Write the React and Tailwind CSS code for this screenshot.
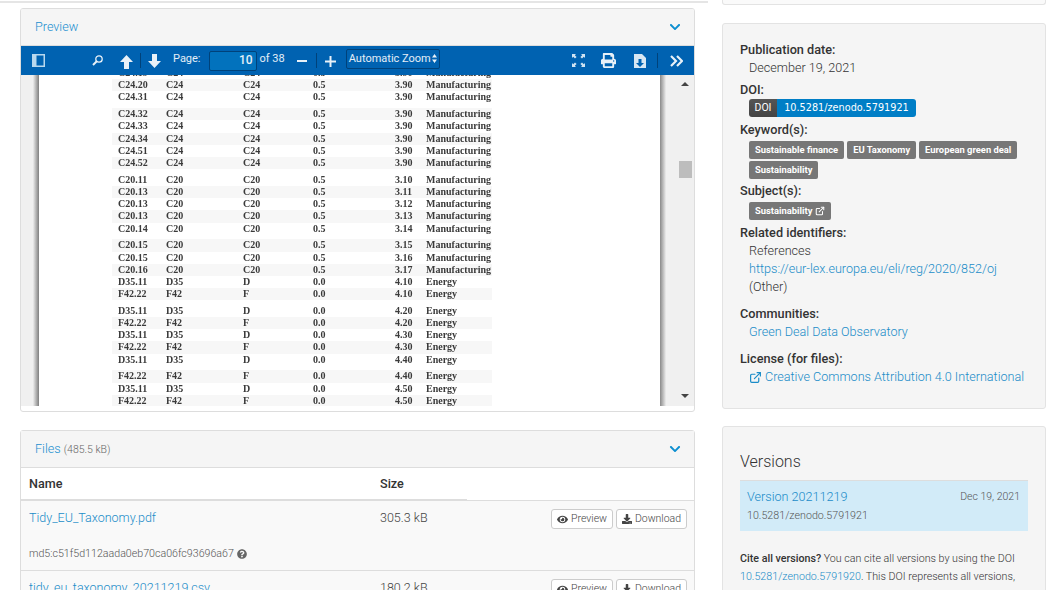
import { ExternalLink } from "lucide-react";
import { FaChevronDown, FaDownload, FaEye, FaQuestionCircle, FaPrint } from "react-icons/fa";

const m = "Manufacturing";
const e = "Energy";
const groups = [
  [
    ["C24.19", "C24", "C24", "0.5", "3.90", m],
    ["C24.20", "C24", "C24", "0.5", "3.90", m],
    ["C24.31", "C24", "C24", "0.5", "3.90", m],
  ],
  [
    ["C24.32", "C24", "C24", "0.5", "3.90", m],
    ["C24.33", "C24", "C24", "0.5", "3.90", m],
    ["C24.34", "C24", "C24", "0.5", "3.90", m],
    ["C24.51", "C24", "C24", "0.5", "3.90", m],
    ["C24.52", "C24", "C24", "0.5", "3.90", m],
  ],
  [
    ["C20.11", "C20", "C20", "0.5", "3.10", m],
    ["C20.13", "C20", "C20", "0.5", "3.11", m],
    ["C20.13", "C20", "C20", "0.5", "3.12", m],
    ["C20.13", "C20", "C20", "0.5", "3.13", m],
    ["C20.14", "C20", "C20", "0.5", "3.14", m],
  ],
  [
    ["C20.15", "C20", "C20", "0.5", "3.15", m],
    ["C20.15", "C20", "C20", "0.5", "3.16", m],
    ["C20.16", "C20", "C20", "0.5", "3.17", m],
    ["D35.11", "D35", "D", "0.0", "4.10", e],
    ["F42.22", "F42", "F", "0.0", "4.10", e],
  ],
  [
    ["D35.11", "D35", "D", "0.0", "4.20", e],
    ["F42.22", "F42", "F", "0.0", "4.20", e],
    ["D35.11", "D35", "D", "0.0", "4.30", e],
    ["F42.22", "F42", "F", "0.0", "4.30", e],
    ["D35.11", "D35", "D", "0.0", "4.40", e],
  ],
  [
    ["F42.22", "F42", "F", "0.0", "4.40", e],
    ["D35.11", "D35", "D", "0.0", "4.50", e],
    ["F42.22", "F42", "F", "0.0", "4.50", e],
  ],
];

function PdfTable() {
  let n = 0;
  return (
    <div className="ml-[73px] w-[380px] -mt-[8px] font-['Liberation_Serif',serif] font-bold text-[10px] text-[#3a3a3a] blur-[0.5px]">
      {groups.map((rows, gi) => (
        <div key={gi} className="mb-[4.64px]">
          {rows.map((r) => {
            n++;
            return (
              <div key={n} className={`grid grid-cols-[48px_77px_70px_82px_31px_1fr] pl-[6px] h-[12.2px] leading-[12.2px] ${n % 2 === 0 ? "bg-[#f7f7f7]" : "bg-white"}`}>
                {r.map((c, i) => <span key={i}>{c}</span>)}
              </div>
            );
          })}
        </div>
      ))}
    </div>
  );
}

function Toolbar() {
  return (
    <div className="h-[29px] bg-[#0062b1] flex items-center text-white/90 text-[11px] font-normal">
      <svg className="ml-[11px]" width="13" height="13" viewBox="0 0 13 13">
        <rect x="0.75" y="0.75" width="11.5" height="11.5" fill="none" stroke="#b9d8ee" strokeWidth="1.5" />
        <rect x="1" y="1" width="3.5" height="11" fill="#b9d8ee" />
      </svg>
      <svg className="ml-[47px]" width="11" height="11" viewBox="0 0 11 11" fill="none" stroke="#e8f1f8">
        <circle cx="7" cy="4" r="3.200" strokeWidth="1.300" />
        <path d="M4.500 6.500 1 10" strokeWidth="2" />
      </svg>
      <svg className="ml-[17px] mt-[2px]" width="13" height="14" viewBox="0 0 13 14"><path d="M6.500 0 13 7H9v7H4V7H0z" fill="#e8f1f8" /></svg>
      <span className="ml-[7px] w-px h-[15px] bg-[#00427a]" />
      <svg className="ml-[7px] mt-[1px]" width="13" height="14" viewBox="0 0 13 14"><path d="M6.500 14 0 7h4V0h5v7h4z" fill="#e8f1f8" /></svg>
      <span className="ml-[12px] -mt-[2px]">Page:</span>
      <span className="ml-[8px] w-[48px] h-[20px] bg-[#0272bd] border border-[#00427a] rounded-[2px] text-right pr-[3px] text-[12px] leading-[17px] font-medium">10</span>
      <span className="ml-[3px] -mt-[2px]">of 38</span>
      <svg className="ml-[12px] mt-[1px]" width="10" height="2" viewBox="0 0 10 2"><rect width="10" height="2" fill="#e8f1f8" /></svg>
      <span className="ml-[9px] w-px h-[15px] bg-[#00427a]" />
      <svg className="ml-[8px] mt-[1px]" width="11" height="11" viewBox="0 0 11 11"><path d="M4.500 0h2v4.500H11v2H6.500V11h-2V6.500H0v-2h4.500z" fill="#e8f1f8" /></svg>
      <span className="ml-[10px] w-[94px] h-[20px] -mt-[4px] border border-[#00427a] rounded-[2px] bg-[#0062b1] text-[11px] leading-[17px] pl-[2px] whitespace-nowrap flex items-center">
        Automatic Zoom
        <svg className="ml-px" width="5" height="9" viewBox="0 0 5 9" fill="#e8f1f8"><path d="M2.500 0 5 3.500H0zM2.500 9 0 5.500h5z" /></svg>
      </span>
      <svg className="ml-[132px]" width="13" height="13" viewBox="0 0 13 13" fill="#cfe3f2">
        <path d="M0 0h4L2.800 1.200 4.600 3 3 4.600 1.200 2.800 0 4zM13 0v4l-1.200-1.200L10 4.600 8.400 3l1.800-1.800L9 0zM0 13V9l1.200 1.200L3 8.400 4.600 10l-1.800 1.800L4 13zM13 13H9l1.200-1.200L8.400 10 10 8.400l1.800 1.800L13 9z" />
      </svg>
      <FaPrint className="ml-[16px] text-[#e8f1f8]" size={15} />
      <svg className="ml-[18px]" width="12" height="14" viewBox="0 0 12 14">
        <path d="M0 0h8l4 4v10H0z" fill="#d7e7f3" />
        <path d="M4.500 5h3v4H10l-4 4-4-4h2.500z" fill="#0062b1" />
      </svg>
      <span className="ml-[11px] w-px h-[15px] bg-[#00427a]" />
      <svg className="ml-[12px]" width="13" height="12" viewBox="0 0 13 12" fill="none" stroke="#e8f1f8" strokeWidth="2.200">
        <path d="M1 1l5 5-5 5M7 1l5 5-5 5" />
      </svg>
    </div>
  );
}

function Preview() {
  return (
    <div className="w-[675px] h-[404px] border border-[#dddddd] rounded-[3px] bg-white overflow-hidden">
      <div className="h-[37px] bg-[#f5f5f5] border-b border-[#dddddd] flex items-center justify-between pl-[14px] pr-[13px] text-[12.6px] font-light text-[#1a8fd0]">
        <span>Preview</span>
        <FaChevronDown size={12} className="text-[#0d8fd0]" />
      </div>
      <Toolbar />
      <div className="h-[331px] flex bg-[#f0f0f0] overflow-hidden">
        <div className="w-[12px] shrink-0" />
        <div className="w-[6px] shrink-0 bg-gradient-to-r from-[#eeeeee] to-[#808080]" />
        <div className="w-[621px] shrink-0 bg-white overflow-hidden">
          <PdfTable />
        </div>
        <div className="w-[6px] shrink-0 bg-gradient-to-r from-[#8a8a8a] to-[#eeeeee]" />
        <div className="flex-1 flex flex-col items-center pl-[10px] pt-[7px]">
          <span className="w-0 h-0 border-x-[4px] border-x-transparent border-b-[4px] border-b-[#444444]" />
          <span className="w-[13px] h-[17px] bg-[#bdbdbd] mt-[75px]" />
          <span className="w-0 h-0 border-x-[4px] border-x-transparent border-t-[4px] border-t-[#444444] mt-[216px]" />
        </div>
      </div>
    </div>
  );
}

function FileRow({ name, size, md5 }) {
  return (
    <div className="bg-[#f9f9f9] border-b border-[#dddddd] pl-2 pr-[7px] h-[70px] font-light">
      <div className="flex pt-[7px]">
        <a className="w-[351px] text-[#1a8cc8] text-[12.500px] leading-[20px]">{name}</a>
        <span className="text-[12.500px] leading-[20px] text-[#444444]">{size}</span>
        <div className="ml-auto flex gap-[3px] mt-px">
          <button className="h-[20px] w-[62px] border border-[#cccccc] rounded-[3px] bg-white text-[10.500px] text-[#444444] flex items-center justify-center gap-[3px]"><FaEye size={11} />Preview</button>
          <button className="h-[20px] w-[71px] border border-[#cccccc] rounded-[3px] bg-white text-[10.500px] text-[#444444] flex items-center justify-center gap-[3px]"><FaDownload size={10} />Download</button>
        </div>
      </div>
      {md5 && (
        <div className="mt-[16px] text-[10.650px] leading-[18px] text-[#555555] flex items-center gap-[3px]">
          md5:{md5} <FaQuestionCircle size={10} className="text-[#666666]" />
        </div>
      )}
    </div>
  );
}

function Files() {
  return (
    <div className="w-[675px] mt-[18px] border border-[#dddddd] rounded-t-[3px]">
      <div className="h-[37px] bg-[#f5f5f5] border-b border-[#dddddd] flex items-center justify-between pl-[14px] pr-[13px] font-light">
        <span className="text-[12.600px] text-[#1a8fd0]">Files <span className="text-[10.500px] text-[#666666]">(485.5 kB)</span></span>
        <FaChevronDown size={12} className="text-[#0d8fd0]" />
      </div>
      <div className="h-[33px] flex items-center pl-2 text-[12.600px] font-medium text-[#333333] bg-white relative border-b border-[#dddddd]">
        <span className="w-[351px]">Name</span>
        <span>Size</span>
        <span className="absolute left-0 -bottom-[1px] w-[446px] h-[2px] bg-[#dddddd]" />
      </div>
      <FileRow name="Tidy_EU_Taxonomy.pdf" size="305.3 kB" md5="c51f5d112aada0eb70ca06fc93696a67" />
      <FileRow name="tidy_eu_taxonomy_20211219.csv" size="180.2 kB" />
    </div>
  );
}

function Label({ children, className = "" }) {
  return <div className={`font-medium text-[12.700px] text-[#333333] leading-[18px] ${className}`}>{children}</div>;
}

function Keyword({ children }) {
  return <span className="h-[18px] px-[6px] bg-[#777777] text-white text-[9.400px] font-bold leading-[18px] rounded-[2px] flex items-center gap-[3px] whitespace-nowrap">{children}</span>;
}

function Meta() {
  return (
    <div className="h-[386px] mt-[18px] border border-[#e3e3e3] rounded-[3px] bg-[#f5f5f5] pl-[17px] pt-[17px] text-[12.600px] font-light text-[#333333]">
      <Label>Publication date:</Label>
      <div className="ml-[9px] leading-[18px]">December 19, 2021</div>
      <Label className="mt-[4px]">DOI:</Label>
      <div className="ml-[9px] flex w-fit h-[18px] rounded-[3px] overflow-hidden text-[10.500px] leading-[18px] text-white">
        <span className="w-[28px] bg-gradient-to-b from-[#555555] to-[#444444] text-center font-normal">DOI</span>
        <span className="w-[139px] bg-[#007ec6] text-center font-['DejaVu_Sans',sans-serif] text-[9.700px] font-normal">10.5281/zenodo.5791921</span>
      </div>
      <Label className="mt-[4px]">Keyword(s):</Label>
      <div className="ml-[9px] mt-[2px] flex flex-wrap gap-x-[3px] gap-y-[2px] w-[280px]">
        <Keyword>Sustainable finance</Keyword>
        <Keyword>EU Taxonomy</Keyword>
        <Keyword>European green deal</Keyword>
        <Keyword>Sustainability</Keyword>
      </div>
      <Label className="mt-[3px]">Subject(s):</Label>
      <div className="ml-[9px] mt-[2px] flex">
        <Keyword>Sustainability <ExternalLink size={10} strokeWidth={2.5} /></Keyword>
      </div>
      <Label className="mt-[4px]">Related identifiers:</Label>
      <div className="ml-[9px] leading-[18px]">
        <div>References</div>
        <a className="block text-[#1a8cc8]">https://eur-lex.europa.eu/eli/reg/2020/852/oj</a>
        <div>(Other)</div>
      </div>
      <Label className="mt-[9px]">Communities:</Label>
      <a className="block ml-[9px] leading-[18px] text-[#1a8cc8]">Green Deal Data Observatory</a>
      <Label className="mt-[9px]">License (for files):</Label>
      <a className="ml-[9px] leading-[18px] text-[#1a8cc8] flex items-center gap-[3px]"><ExternalLink size={13} strokeWidth={2.2} />Creative Commons Attribution 4.0 International</a>
    </div>
  );
}

function Versions() {
  return (
    <div className="mt-[17px] border border-[#e3e3e3] rounded-t-[3px] bg-[#f5f5f5] pl-[17px] pr-[17px] pt-[24px] font-light text-[#333333] h-[200px] overflow-hidden">
      <div className="text-[16px] leading-[22px] font-light text-[#333333]">Versions</div>
      <div className="mt-[7px] h-[51px] bg-[#d2ebf8] border-t border-[#dddddd] pl-[7px] pr-[8px] pt-[7px]">
        <div className="flex justify-between items-center">
          <a className="text-[12.600px] leading-[18px] text-[#1a8cc8]">Version 20211219</a>
          <span className="text-[10.500px] text-[#555555]">Dec 19, 2021</span>
        </div>
        <div className="text-[10.700px] leading-[20px] text-[#555555]">10.5281/zenodo.5791921</div>
      </div>
      <p className="mt-[19px] text-[10.700px] leading-[18px] text-[#333333]">
        <b className="font-medium">Cite all versions?</b> You can cite all versions by using the DOI <a className="text-[#1a8cc8]">10.5281/zenodo.5791920</a>. This DOI represents all versions, and will always resolve to the latest one. <a className="text-[#1a8cc8]">Read more</a>.
      </p>
    </div>
  );
}

export default function App() {
  return (
    <div className="w-[1048px] h-[590px] overflow-hidden bg-white flex font-['Roboto',sans-serif]">
      <div className="w-[708px] shrink-0 pl-5 border-t-2 border-[#e5e5e5] mt-px pt-[5px]">
        <Preview />
        <Files />
      </div>
      <div className="w-[324px] ml-[14px] shrink-0">
        <div className="h-[5px] border-x border-b border-[#e3e3e3] rounded-b-[3px] bg-[#fafafa]" />
        <Meta />
        <Versions />
      </div>
    </div>
  );
}
